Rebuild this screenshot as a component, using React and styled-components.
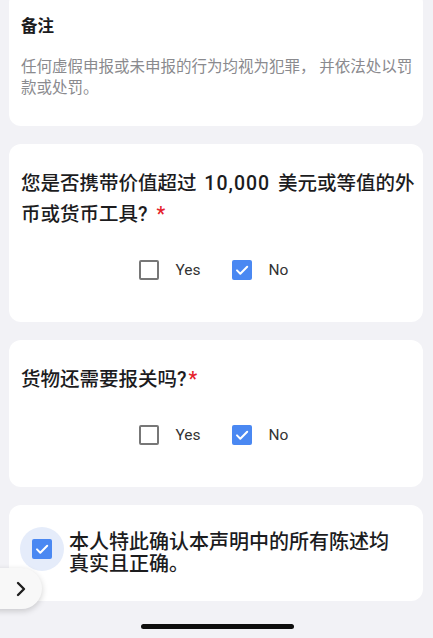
import styled, { createGlobalStyle } from 'styled-components';

const GlobalStyle = createGlobalStyle`
  html, body {
    margin: 0;
    padding: 0;
    height: 100%;
    overflow: hidden;
    background: #f2f2f6;
    font-family: Roboto, "Noto Sans CJK SC", "Noto Sans", sans-serif;
    -webkit-font-smoothing: antialiased;
  }
  * { box-sizing: border-box; }
`

const Page = styled.div`
  display: flex;
  flex-direction: column;
  gap: 18px;
  padding: 0 10px 40px 9px;
  margin-top: -9px;
`

const Card = styled.div`
  background: #fff;
  border-radius: 12px;
  padding: ${p => p.$pad || '24px 8px 32px 12px'};
`

const NoteTitle = styled.div`
  font-size: 16.5px;
  line-height: 24px;
  font-weight: 700;
  color: #1c1c1e;
`

const NoteText = styled.p`
  margin: 17.5px 0 0;
  font-size: 15.5px;
  line-height: 21px;
  color: #8a8a8e;
`

const Question = styled.div`
  font-size: 19.5px;
  line-height: 31px;
  font-weight: 500;
  color: #1c1c1e;
`

const Num = styled.span`
  letter-spacing: 1px;
  margin: 0 3px;
`

const Required = styled.span`
  color: #e5212b;
  margin-left: ${p => p.$gap || '2px'};
`

const OptionRow = styled.div`
  display: flex;
  justify-content: center;
  align-items: center;
  gap: 31px;
  height: 40px;
  margin-top: 20px;
  padding-right: 9px;
`

const Option = styled.label`
  display: flex;
  align-items: center;
  gap: 17px;
  font-size: 15.5px;
  color: #333;
`

const Box = styled.span`
  width: 20px;
  height: 20px;
  border-radius: 2px;
  display: flex;
  align-items: center;
  justify-content: center;
  background: ${p => (p.$checked ? '#4a88f2' : '#fff')};
  border: ${p => (p.$checked ? 'none' : '2.5px solid #777')};
`

const ConfirmRow = styled.div`
  display: flex;
  align-items: flex-start;
  gap: 5px;
`

const Halo = styled.div`
  flex: none;
  width: 44px;
  height: 44px;
  border-radius: 50%;
  background: #e5ecfa;
  display: flex;
  align-items: center;
  justify-content: center;
`

const ConfirmText = styled.div`
  padding-top: 4px;
  font-size: 20px;
  line-height: 22px;
  font-weight: 500;
  color: #1c1c1e;
`

const SideTab = styled.button`
  position: fixed;
  left: -22px;
  top: 568px;
  width: 64px;
  height: 41px;
  border: none;
  border-radius: 21px;
  background: #f8f8f8;
  box-shadow: 0 2px 6px rgba(0, 0, 0, 0.18);
  display: flex;
  align-items: center;
  justify-content: flex-end;
  padding: 0 16px 0 0;
`

const HomeBar = styled.div`
  position: fixed;
  left: 50%;
  bottom: 9px;
  width: 153px;
  height: 5px;
  margin-left: -76px;
  border-radius: 3px;
  background: #0e0e0e;
`

const Check = ({ checked }) => (
  <Box $checked={checked}>
    {checked && (
      <svg width="20" height="20" viewBox="0 0 20 20">
        <path d="M5 10.4l3.3 3.3L15.2 6.8" fill="none" stroke="#fff" strokeWidth="2" strokeLinecap="round" strokeLinejoin="round" />
      </svg>
    )}
  </Box>
)

const YesNo = ({ value }) => (
  <OptionRow>
    <Option><Check checked={value === 'yes'} />Yes</Option>
    <Option><Check checked={value === 'no'} />No</Option>
  </OptionRow>
)

export default function App() {
  return (
    <>
      <GlobalStyle />
      <Page>
        <Card $pad="24px 8px 27.5px 12px">
          <NoteTitle>备注</NoteTitle>
          <NoteText>任何虚假申报或未申报的行为均视为犯罪， 并依法处以罚款或处罚。</NoteText>
        </Card>

        <Card>
          <Question>您是否携带价值超过 <Num>10,000</Num> 美元或等值的外币或货币工具?<Required $gap="9px">*</Required></Question>
          <YesNo value="no" />
        </Card>

        <Card>
          <Question>货物还需要报关吗?<Required>*</Required></Question>
          <YesNo value="no" />
        </Card>

        <Card $pad="22px 24px 26px 11px">
          <ConfirmRow>
            <Halo><Check checked /></Halo>
            <ConfirmText>本人特此确认本声明中的所有陈述均真实且正确。</ConfirmText>
          </ConfirmRow>
        </Card>
      </Page>

      <SideTab>
        <svg width="10" height="16" viewBox="0 0 10 16">
          <path d="M2 2l6 6-6 6" fill="none" stroke="#1f1f1f" strokeWidth="2.4" strokeLinecap="round" strokeLinejoin="round" />
        </svg>
      </SideTab>
      <HomeBar />
    </>
  );
}
